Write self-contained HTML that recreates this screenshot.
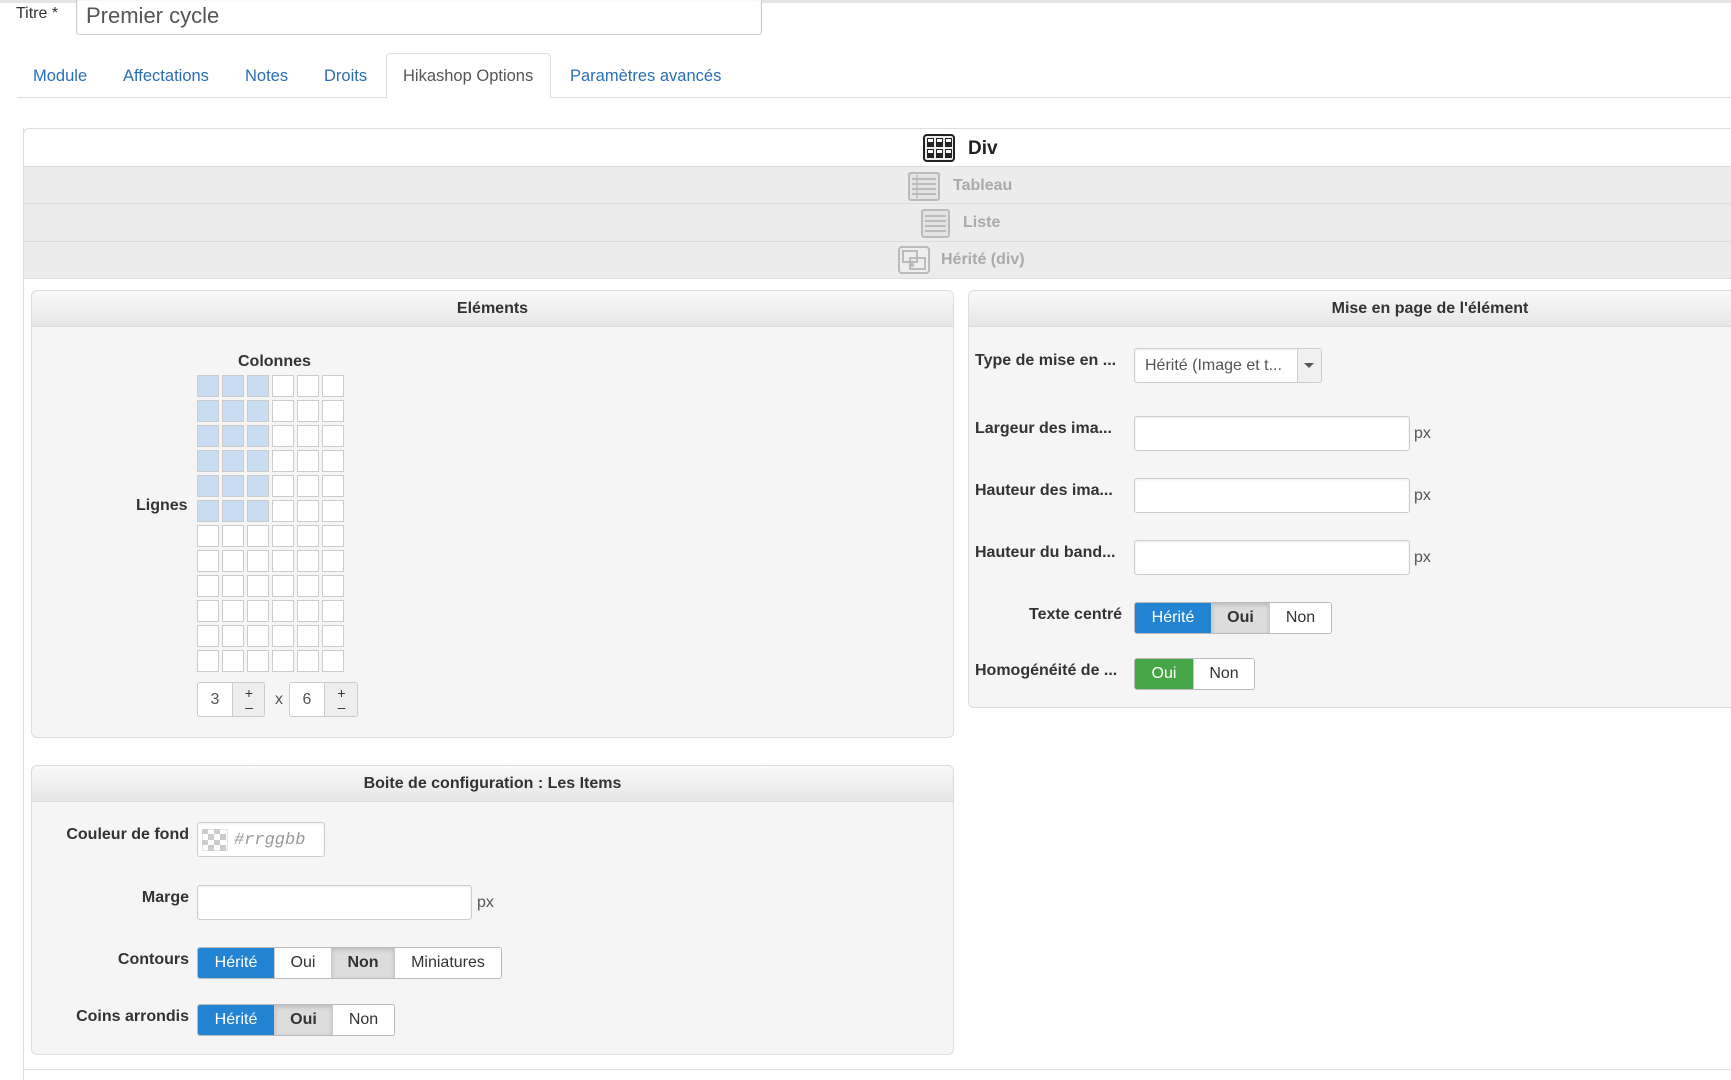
<!DOCTYPE html>
<html><head><meta charset="utf-8"><style>
*{box-sizing:border-box;margin:0;padding:0}
body{width:1731px;height:1080px;overflow:hidden;background:#fff;font-family:"Liberation Sans",sans-serif;color:#333;position:relative}
.a{position:absolute}
.lbl{position:absolute;font-weight:bold;font-size:16px;color:#333;white-space:nowrap}
.r{text-align:right}
.inp{position:absolute;background:#fff;border:1px solid #ccc;border-radius:3px;box-shadow:inset 0 1px 2px rgba(0,0,0,.08)}
.px{position:absolute;font-size:16px;color:#555}
.panel{position:absolute;background:#f5f5f5;border:1px solid #ddd;border-radius:6px}
.ph{height:36px;background:linear-gradient(#f9f9f9,#e6e6e6);border-bottom:1px solid #ddd;border-radius:6px 6px 0 0;text-align:center;font-weight:bold;font-size:16px;line-height:36px;color:#333}
.bg{position:absolute;display:flex;border-radius:3px;overflow:hidden;border:1px solid #bbb;font-size:16px}
.bg div{text-align:center;background:#fff;color:#333;border-left:1px solid #ccc}
.bg div:first-child{border-left:none}
.bg .b{background:#2384d3;color:#fff}
.bg .g{background:#46a546;color:#fff}
.bg .s{background:#dcdcdc;font-weight:bold;box-shadow:inset 0 2px 4px rgba(0,0,0,.15)}
.band{position:absolute;left:23px;right:0;border:1px solid #ddd;border-right:none;border-radius:6px 0 0 0}
.bt{position:absolute;font-weight:bold;font-size:16px;color:#aaa}
.cell{position:absolute;width:22px;height:22px;border:1px solid #ccc;background:#fff}
.cell.on{background:#c8ddf1}
</style></head><body>
<div class="a" style="left:0;top:0;width:1731px;height:3px;background:#e5e5e5"></div>
<div class="a" style="left:16px;top:5px;font-size:16px;color:#333">Titre *</div>
<div class="inp" style="left:76px;top:-2px;width:686px;height:37px;font-size:22px;line-height:33px;padding-left:9px;color:#555">Premier cycle</div>

<div class="a" style="left:17px;top:97px;width:1714px;height:1px;background:#ddd"></div>
<div class="a" style="left:386px;top:53px;width:165px;height:45px;background:#fff;border:1px solid #ddd;border-bottom:none;border-radius:4px 4px 0 0"></div>
<div class="a" style="top:67px;font-size:16.5px;color:#2a6fb5;left:33px">Module</div>
<div class="a" style="top:67px;font-size:16.5px;color:#2a6fb5;left:123px">Affectations</div>
<div class="a" style="top:67px;font-size:16.5px;color:#2a6fb5;left:245px">Notes</div>
<div class="a" style="top:67px;font-size:16.5px;color:#2a6fb5;left:324px">Droits</div>
<div class="a" style="top:67px;font-size:16.5px;color:#555;left:403px">Hikashop Options</div>
<div class="a" style="top:67px;font-size:16.5px;color:#2a6fb5;left:570px">Paramètres avancés</div>

<div class="a" style="left:23px;top:128px;width:1px;height:952px;background:#ddd"></div>
<div class="band" style="top:128px;height:39px;background:#fff"></div>
<div class="band" style="top:166px;height:38px;background:#ececec;border-radius:0"></div>
<div class="band" style="top:203px;height:39px;background:#ececec;border-radius:0"></div>
<div class="band" style="top:241px;height:38px;background:#ececec;border-radius:0"></div>
<svg class="a" style="left:923px;top:134px" width="32" height="28" viewBox="0 0 32 28"><rect x="1" y="1" width="30" height="26" rx="3" fill="#eee" stroke="#222" stroke-width="2"/><g fill="#222"><rect x="4" y="4" width="7" height="9"/><rect x="13" y="4" width="7" height="9"/><rect x="22" y="4" width="7" height="9"/><rect x="4" y="15" width="7" height="9"/><rect x="13" y="15" width="7" height="9"/><rect x="22" y="15" width="7" height="9"/></g><g fill="#fff"><rect x="5" y="5" width="5" height="3"/><rect x="14" y="5" width="5" height="3"/><rect x="23" y="5" width="5" height="3"/><rect x="5" y="16" width="5" height="3"/><rect x="14" y="16" width="5" height="3"/><rect x="23" y="16" width="5" height="3"/></g></svg>
<div class="a" style="left:968px;top:138px;font-weight:bold;font-size:19px;color:#222">Div</div>
<svg class="a" style="left:908px;top:172px" width="32" height="29" viewBox="0 0 32 29"><rect x="1" y="1" width="30" height="27" rx="2" fill="#e4e4e4" stroke="#bbb" stroke-width="2"/><g stroke="#bbb" stroke-width="2"><line x1="4" y1="7" x2="28" y2="7"/><line x1="4" y1="12" x2="28" y2="12"/><line x1="4" y1="17" x2="28" y2="17"/><line x1="4" y1="22" x2="28" y2="22"/><line x1="9" y1="3" x2="9" y2="26" stroke-width="1.5"/></g></svg>
<div class="bt" style="left:953px;top:177px">Tableau</div>
<svg class="a" style="left:921px;top:209px" width="29" height="29" viewBox="0 0 29 29"><rect x="1" y="1" width="27" height="27" rx="2" fill="#e4e4e4" stroke="#bbb" stroke-width="2"/><g stroke="#bbb" stroke-width="2"><line x1="4" y1="7" x2="25" y2="7"/><line x1="4" y1="12" x2="25" y2="12"/><line x1="4" y1="17" x2="25" y2="17"/><line x1="4" y1="22" x2="25" y2="22"/></g></svg>
<div class="bt" style="left:963px;top:214px">Liste</div>
<svg class="a" style="left:898px;top:246px" width="32" height="28" viewBox="0 0 32 28"><rect x="1" y="1" width="30" height="26" rx="3" fill="#eee" stroke="#bbb" stroke-width="2"/><rect x="5" y="5" width="14" height="11" fill="none" stroke="#bbb" stroke-width="2"/><rect x="12" y="12" width="15" height="11" fill="none" stroke="#bbb" stroke-width="2"/><circle cx="14" cy="19" r="2" fill="#bbb"/></svg>
<div class="bt" style="left:941px;top:251px">Hérité (div)</div>

<div class="panel" style="left:31px;top:290px;width:923px;height:448px"><div class="ph">Eléments</div></div>
<div class="a" style="left:238px;top:353px;font-weight:bold;font-size:16px">Colonnes</div>
<div class="a" style="left:136px;top:497px;font-weight:bold;font-size:16px">Lignes</div>
<div id="grid"></div>
<div class="a" style="left:197px;top:682px;width:68px;height:35px;border:1px solid #ccc;border-radius:3px;background:#fff;overflow:hidden"><div class="a" style="left:0;top:0;width:34px;height:33px;line-height:33px;text-align:center;font-size:16px;color:#555">3</div><div class="a" style="left:34px;top:0;width:33px;height:33px;background:#eee;border-left:1px solid #ccc;text-align:center;font-size:14px;line-height:14px;padding-top:3px">+<br>–</div></div>
<div class="a" style="left:275px;top:691px;font-size:16px;color:#555">x</div>
<div class="a" style="left:289px;top:682px;width:69px;height:35px;border:1px solid #ccc;border-radius:3px;background:#fff;overflow:hidden"><div class="a" style="left:0;top:0;width:34px;height:33px;line-height:33px;text-align:center;font-size:16px;color:#555">6</div><div class="a" style="left:34px;top:0;width:34px;height:33px;background:#eee;border-left:1px solid #ccc;text-align:center;font-size:14px;line-height:14px;padding-top:3px">+<br>–</div></div>

<div class="panel" style="left:968px;top:290px;width:924px;height:418px"><div class="ph">Mise en page de l'élément</div></div>
<div class="lbl" style="left:975px;top:352px">Type de mise en ...</div>
<div class="inp" style="left:1134px;top:348px;width:188px;height:35px;overflow:hidden"><div class="a" style="left:10px;top:8px;font-size:16px;color:#555;white-space:nowrap">Hérité (Image et t...</div><div class="a" style="right:0;top:0;width:24px;height:33px;background:#f0f0f0;border-left:1px solid #ccc"></div><div class="a" style="right:7px;top:14px;border:5px solid transparent;border-top:5px solid #555;border-bottom:none"></div></div>
<div class="lbl" style="left:975px;top:420px">Largeur des ima...</div>
<div class="inp" style="left:1134px;top:416px;width:276px;height:35px"></div><div class="px" style="left:1414px;top:425px">px</div>
<div class="lbl" style="left:975px;top:482px">Hauteur des ima...</div>
<div class="inp" style="left:1134px;top:478px;width:276px;height:35px"></div><div class="px" style="left:1414px;top:487px">px</div>
<div class="lbl" style="left:975px;top:544px">Hauteur du band...</div>
<div class="inp" style="left:1134px;top:540px;width:276px;height:35px"></div><div class="px" style="left:1414px;top:549px">px</div>
<div class="lbl" style="left:1029px;top:606px">Texte centré</div>
<div class="bg" style="left:1134px;top:602px;height:32px;line-height:30px"><div class="b" style="width:76px">Hérité</div><div class="s" style="width:58px">Oui</div><div style="width:62px">Non</div></div>
<div class="lbl" style="left:975px;top:662px">Homogénéité de ...</div>
<div class="bg" style="left:1134px;top:658px;height:32px;line-height:30px"><div class="g" style="width:58px">Oui</div><div style="width:61px">Non</div></div>

<div class="panel" style="left:31px;top:765px;width:923px;height:290px"><div class="ph">Boite de configuration : Les Items</div></div>
<div class="lbl r" style="right:1542px;top:826px">Couleur de fond</div>
<div class="inp" style="left:197px;top:822px;width:128px;height:35px"><svg class="a" style="left:4px;top:6px" width="26" height="22" viewBox="0 0 26 22"><rect width="26" height="22" fill="#fff" stroke="#ccc"/><g fill="#ccc"><rect x="0" y="0" width="6" height="5"/><rect x="12" y="0" width="6" height="5"/><rect x="6" y="5" width="6" height="6"/><rect x="18" y="5" width="6" height="6"/><rect x="0" y="11" width="6" height="5"/><rect x="12" y="11" width="6" height="5"/><rect x="6" y="16" width="6" height="6"/><rect x="18" y="16" width="6" height="6"/></g></svg><div class="a" style="left:36px;top:8px;font-family:'Liberation Mono',monospace;font-style:italic;font-size:17px;color:#999">#rrggbb</div></div>
<div class="lbl r" style="right:1542px;top:889px">Marge</div>
<div class="inp" style="left:197px;top:885px;width:275px;height:35px"></div><div class="px" style="left:477px;top:894px">px</div>
<div class="lbl r" style="right:1542px;top:951px">Contours</div>
<div class="bg" style="left:197px;top:947px;height:32px;line-height:30px"><div class="b" style="width:76px">Hérité</div><div style="width:57px">Oui</div><div class="s" style="width:63px">Non</div><div style="width:107px">Miniatures</div></div>
<div class="lbl r" style="right:1542px;top:1008px">Coins arrondis</div>
<div class="bg" style="left:197px;top:1004px;height:32px;line-height:30px"><div class="b" style="width:76px">Hérité</div><div class="s" style="width:58px">Oui</div><div style="width:62px">Non</div></div>

<div class="a" style="left:23px;top:1069px;width:1708px;height:1px;background:#ddd"></div>
<script>
var g=document.getElementById('grid'),h='';
for(var r=0;r<12;r++)for(var c=0;c<6;c++){h+='<div class="cell'+(r<6&&c<3?' on':'')+'" style="left:'+(197+c*25)+'px;top:'+(375+r*25)+'px"></div>';}
g.innerHTML=h;
</script>
</body></html>
